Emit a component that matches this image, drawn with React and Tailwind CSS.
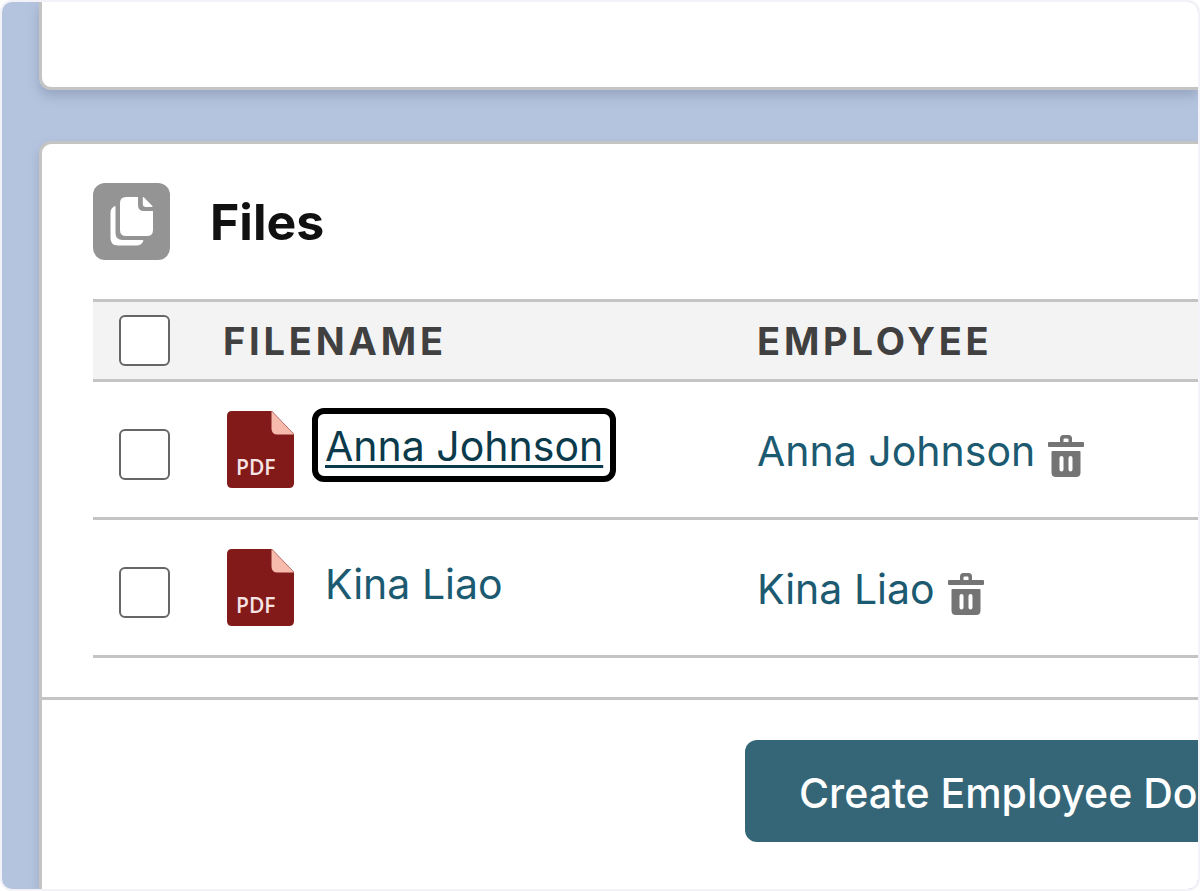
const files = [
  { id: "anna", name: "Anna Johnson", focused: true },
  { id: "kina", name: "Kina Liao", focused: false },
];

const boxClass =
  "block h-[51px] w-[51px] appearance-none rounded-md border-2 border-[#666] bg-white checked:bg-[#346678]";

function FilesIcon() {
  return (
    <svg viewBox="0 0 77 77" className="h-[77px] w-[77px] shrink-0" aria-hidden="true">
      <rect width="77" height="77" rx="12" fill="#949494" />
      <path
        fill="#fff"
        d="M33 14h12v8q0 6 6 6h9v19q0 6-6 6H33q-6 0-6-6V20q0-6 6-6ZM51 14.500q-1.200-1-1.200 .5v6q0 3 3 3h6q1.600 0 .4-1.200ZM22.500 23.500V50q0 7 7 7h20q1.500 0 .6 1.500-2 4-6.500 4H25q-7.500 0-7.500-7.500V29.500q0-4 3.500-6 1.500-1 1.500 0Z"
      />
    </svg>
  );
}

function PdfIcon() {
  return (
    <svg viewBox="0 0 67 77" className="h-[77px] w-[67px] shrink-0" role="img" aria-label="PDF file">
      <path fill="#831a1a" d="M5 0h40l22 23v49q0 5-5 5H5q-5 0-5-5V5q0-5 5-5Z" />
      <path fill="#f7bbae" d="M44.500 0 67 23.500H50.500q-6 0-6-6Z" />
      <text x="9" y="64" fill="#f6e4e4" fontSize="21" fontFamily="'Open Sans', 'Noto Sans', sans-serif" fontWeight="600">
        PDF
      </text>
    </svg>
  );
}

function TrashIcon() {
  return (
    <svg viewBox="0 0 36 42" className="h-[42px] w-9" aria-hidden="true">
      <path
        fill="#747474"
        fillRule="evenodd"
        d="M1 7h11V3.500Q12 0 15.500 0h5Q24 0 24 3.500V7h11q1 0 1 1v3q0 1-1 1H1q-1 0-1-1V8q0-1 1-1ZM15.500 7h5V4.500q0-1-1-1h-3q-1 0-1 1ZM4.500 16h27q1 0 1 1v20.500q0 4.500-4.500 4.500H8q-4.500 0-4.500-4.500V17q0-1 1-1ZM11.500 23v11.500q0 2 2 2t2-2V23q0-2-2-2t-2 2ZM20.500 23v11.500q0 2 2 2t2-2V23q0-2-2-2t-2 2Z"
      />
    </svg>
  );
}

export default function App() {
  return (
    <div className="flex min-h-screen flex-col overflow-hidden rounded-xl border-2 border-[#f3f2f8] bg-[#b5c4de] pl-[37px] font-['Inter',sans-serif]">
      <section
        aria-label="Details"
        className="h-[88px] rounded-bl-xl border-b-3 border-l-3 border-[#c4c4c4] bg-white shadow-[0_6px_12px_rgba(60,75,110,0.25)]"
      />
      <main className="mt-[51px] flex grow flex-col rounded-tl-xl border-t-3 border-l-3 border-[#c4c4c4] bg-white shadow-[0_6px_12px_rgba(60,75,110,0.2)]">
        <div className="pt-[39px] pb-[39px] pl-[51px]">
          <header className="flex items-center gap-10">
            <FilesIcon />
            <h1 className="text-[50px] leading-[60px] font-bold text-[#111]">Files</h1>
          </header>
          <table className="mt-[39px] w-full table-fixed border-separate border-spacing-0 text-left">
            <colgroup>
              <col className="w-[130px]" />
              <col className="w-[534px]" />
              <col />
            </colgroup>
            <thead className="text-[38px] leading-[48px] tracking-widest text-[#404040] uppercase">
              <tr className="h-[83px]">
                <th className="border-y-3 border-[#c4c4c4] bg-[#f3f3f3] p-0 pl-[26px]">
                  <input type="checkbox" aria-label="Select all files" className={boxClass} />
                </th>
                <th className="border-y-3 border-[#c4c4c4] bg-[#f3f3f3] p-0 font-bold">Filename</th>
                <th className="border-y-3 border-[#c4c4c4] bg-[#f3f3f3] p-0 font-bold">Employee</th>
              </tr>
            </thead>
            <tbody className="text-[41px] leading-[50px] text-[#1b5a70]">
              {files.map((file) => (
                <tr key={file.id} className="h-[138px]">
                  <td className="border-b-3 border-[#c4c4c4] p-0 pt-[10px] pl-[26px]">
                    <input type="checkbox" aria-label={"Select " + file.name} className={boxClass} />
                  </td>
                  <td className="border-b-3 border-[#c4c4c4] p-0 pl-1">
                    <div className="flex items-start gap-[18px]">
                      <PdfIcon />
                      <a
                        href={"#file-" + file.id}
                        className={
                          file.focused
                            ? "-mt-[3px] rounded-xl border-6 border-black px-[7px] pt-[7px] pb-[5px] text-[#0b3a4b] underline decoration-3 underline-offset-4"
                            : "-mt-[3px] border-6 border-transparent px-[7px] pt-[7px] pb-[5px]"
                        }
                      >
                        {file.name}
                      </a>
                    </div>
                  </td>
                  <td className="border-b-3 border-[#c4c4c4] p-0 pt-[3px]">
                    <div className="flex items-center gap-[13px]">
                      <a href={"#employee-" + file.id}>{file.name}</a>
                      <button type="button" aria-label={"Delete " + file.name} className="pt-[10px]">
                        <TrashIcon />
                      </button>
                    </div>
                  </td>
                </tr>
              ))}
            </tbody>
          </table>
        </div>
        <footer className="flex border-t-3 border-[#c4c4c4] pt-10 pb-[46px] pl-[703px]">
          <button
            type="button"
            className="h-[102px] shrink-0 rounded-xl bg-[#346678] px-[54px] pt-1 text-[41px] leading-[50px] font-medium whitespace-nowrap text-white"
          >
            Create Employee Document
          </button>
        </footer>
      </main>
    </div>
  );
}
